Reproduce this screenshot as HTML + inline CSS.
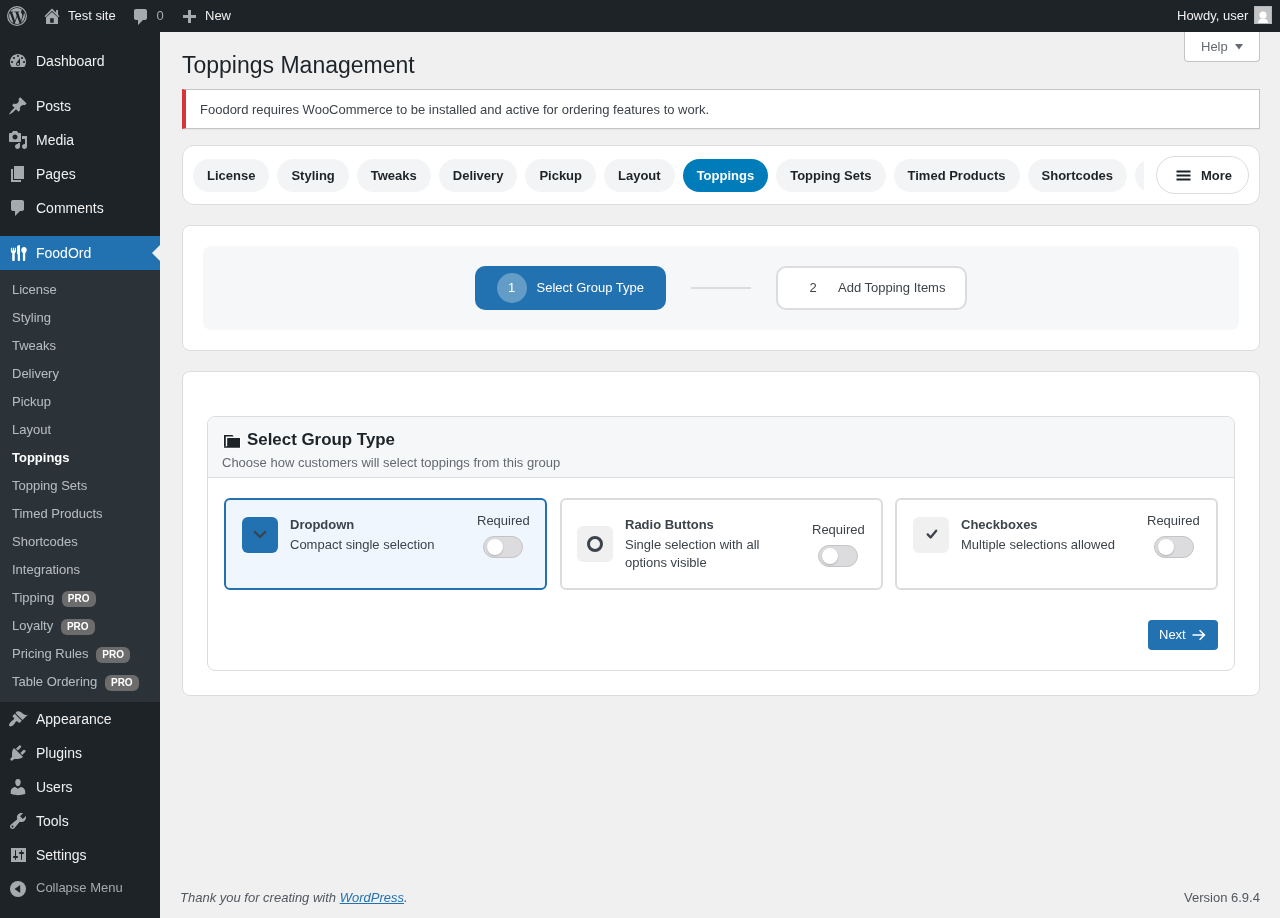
<!DOCTYPE html>
<html><head><meta charset="utf-8">
<style>
*{box-sizing:border-box;margin:0;padding:0}
html,body{width:1280px;height:918px;overflow:hidden;background:#f0f0f1;font-family:"Liberation Sans",sans-serif;font-size:13px;color:#3c434a}
.abs{position:absolute}
#adminbar{position:absolute;left:0;top:0;width:1280px;height:32px;background:#1d2327;color:#f0f0f1;font-size:13px;line-height:32px}
#adminbar .t{position:absolute;top:0;white-space:nowrap}
#menu{position:absolute;left:0;top:32px;width:160px;height:886px;background:#1d2327}
.mi{position:absolute;left:0;width:160px;height:34px;color:#f0f0f1;font-size:14px;line-height:18px}
.mi .lbl{position:absolute;left:36px;top:8px;white-space:nowrap}
.mi svg{position:absolute;left:8px;top:7px;width:20px;height:20px}
#sub{position:absolute;left:0;top:270px;width:160px;height:432px;background:#2c3338}
.si{position:absolute;left:12px;color:rgba(240,246,252,.7);font-size:13px;line-height:18px;white-space:nowrap}
.si.cur{color:#fff;font-weight:700}
.pro{display:inline-block;background:#6c6c6c;color:#fff;font-size:10px;font-weight:700;border-radius:6px;padding:0 6.4px 0 6.3px;line-height:15.5px;height:16px;vertical-align:top;margin-left:7.4px;position:relative;top:2px}

.help{position:absolute;left:1184px;top:32px;width:76px;height:30px;background:#fff;border:1px solid #c3c4c7;border-top:none;border-radius:0 0 4px 4px;color:#646970;font-size:13px}
.h1{position:absolute;left:182px;top:51px;font-size:23px;font-weight:400;color:#1d2327;line-height:29.9px;white-space:nowrap}
.notice{position:absolute;left:182px;top:89px;width:1078px;height:40px;background:#fff;border:1px solid #c3c4c7;border-left:4px solid #d63638;box-shadow:0 1px 1px rgba(0,0,0,.04)}
.notice p{position:absolute;left:14px;top:10px;font-size:13px;line-height:19px;color:#3c434a;white-space:nowrap}
.tabs{position:absolute;left:182px;top:145px;width:1078px;height:60px;background:#fff;border:1px solid #dcdcde;border-radius:12px}
.tabscroll{position:absolute;left:10px;top:0;width:951px;height:58px;overflow:hidden}
.pills{position:absolute;left:0;top:13px;display:flex;gap:8px;white-space:nowrap}
.pill{height:33px;line-height:33px;padding:0 14px;border-radius:17px;background:#f3f4f5;color:#1d2327;font-weight:700;font-size:13px}
.pill.on{background:#007cba;color:#fff}
.more{position:absolute;left:973px;top:10px;width:93px;height:38px;border:1px solid #dcdcde;border-radius:19px;background:#fff;font-weight:700;color:#1d2327;font-size:13px}
.card{position:absolute;left:182px;width:1078px;background:#fff;border:1px solid #dcdcde;border-radius:8px}
.stepbg{position:absolute;left:20px;top:20px;width:1036px;height:84px;background:#f6f7f9;border-radius:8px}
.step{position:absolute;top:266px;height:44px;border-radius:10px;font-size:13px;white-space:nowrap}
.gbox{position:absolute;left:207px;top:416px;width:1028px;height:255px;border:1px solid #dcdcde;border-radius:8px;background:#fff;overflow:hidden}
.ghead{position:absolute;left:0;top:0;width:100%;height:61px;background:#f6f7f9;border-bottom:1px solid #dcdcde}
.opt{position:absolute;top:498px;width:323px;height:92px;border:2px solid #dcdcde;border-radius:6px;background:#fff}
.opt.sel{border-color:#2271b1;background:#eff6fd}
.ibox{position:absolute;width:36px;height:36px;border-radius:6px;background:#f0f0f1}
.ot{position:absolute;font-size:13px;line-height:18px;color:#3c434a}
.ot b{display:block;color:#3c434a;font-weight:700}
.req{position:absolute;font-size:13px;line-height:18px;color:#3c434a;white-space:nowrap}
.tog{position:absolute;width:40px;height:22px;border-radius:11px;background:#dcdcde;border:1px solid #c3c4c7}
.tog i{position:absolute;left:3px;top:2px;width:16px;height:16px;border-radius:50%;background:#fff;box-shadow:0 1px 2px rgba(0,0,0,.2)}
.next{position:absolute;left:1148px;top:620px;width:70px;height:30px;background:#2271b1;border-radius:4px;color:#fff;font-size:13px}
.foot{position:absolute;left:180px;top:889px;font-size:13px;line-height:18px;color:#50575e;font-style:italic;white-space:nowrap}
.foot a{color:#2271b1;text-decoration:underline}
.ver{position:absolute;right:20px;top:889px;font-size:13px;line-height:18px;color:#50575e;white-space:nowrap}

body>*{will-change:transform}</style></head><body>

<div id="adminbar">
  <svg class="abs" style="left:7px;top:6px" width="20" height="20" viewBox="0 0 24 24"><circle cx="12" cy="12" r="11.2" fill="none" stroke="#a7aaad" stroke-width="1.5"/><path transform="translate(12 12) scale(0.88) translate(-12 -12)" d="M21.469 6.825c.84 1.537 1.318 3.3 1.318 5.175 0 3.979-2.156 7.456-5.363 9.325l3.295-9.527c.615-1.54.82-2.771.82-3.864 0-.405-.026-.78-.07-1.11m-7.981.105c.647-.03 1.232-.105 1.232-.105.582-.075.514-.93-.067-.899 0 0-1.755.135-2.88.135-1.064 0-2.85-.15-2.85-.15-.585-.03-.661.855-.075.885 0 0 .54.061 1.125.09l1.68 4.605-2.37 7.08L5.354 6.9c.649-.03 1.234-.1 1.234-.1.585-.075.516-.93-.065-.896 0 0-1.746.138-2.874.138-.2 0-.438-.008-.69-.015C4.911 3.15 8.235 1.215 12 1.215c2.809 0 5.365 1.072 7.286 2.833-.046-.003-.091-.009-.141-.009-1.06 0-1.812.923-1.812 1.914 0 .89.513 1.643 1.06 2.531.411.72.89 1.643.89 2.977 0 .915-.354 1.994-.821 3.479l-1.075 3.585-3.9-11.61.001.014zM12 22.784c-1.059 0-2.081-.153-3.048-.437l3.237-9.406 3.315 9.087c.024.053.05.101.078.149-1.12.393-2.325.609-3.582.609M1.211 12c0-1.564.336-3.05.935-4.39L7.29 21.709C3.694 19.96 1.212 16.271 1.211 12" fill="#a7aaad"/></svg>
  <svg class="abs" style="left:40px;top:4px" width="24" height="24" viewBox="0 0 24 24"><path d="M5.5 12.2 L12 5.7 L18.5 12.2" fill="none" stroke="#a7aaad" stroke-width="1.6" stroke-linecap="round"/><rect x="16.1" y="6" width="1.9" height="5" fill="#a7aaad"/><path d="M6 13.6 L12 8 L18 13.6 V20.1 H6Z M10.2 14.2 V18.7 H13.7 V14.2Z" fill="#a7aaad" fill-rule="evenodd"/></svg>
  <span class="t" style="left:68px">Test site</span>
  <svg class="abs" style="left:131px;top:7px" width="20" height="20" viewBox="0 0 20 20"><path d="M5 2h9c1.1 0 2 .9 2 2v7c0 1.1-.9 2-2 2h-2l-5 5v-5H5c-1.1 0-2-.9-2-2V4c0-1.1.9-2 2-2z" fill="#a7aaad"/></svg>
  <span class="t" style="left:156.6px;color:#a7aaad">0</span>
  <svg class="abs" style="left:183px;top:10px" width="13" height="13" viewBox="0 0 13 13"><path d="M5 0 H8 V5 H13 V8 H8 V13 H5 V8 H0 V5 H5Z" fill="#a7aaad"/></svg>
  <span class="t" style="left:205px">New</span>
  <span class="t" style="left:1177px">Howdy, user</span>
  <div class="abs" style="left:1254px;top:6px;width:18px;height:18px;background:#c4c4c4;border:1px solid #b4b6b8;overflow:hidden"><svg class="abs" style="left:0;top:0" width="16" height="16" viewBox="0 0 16 16"><circle cx="8" cy="8" r="3.6" fill="#fff"/><path d="M2.8 16.5 C3 13.2 5 11.6 8 11.6 C11 11.6 13 13.2 13.2 16.5Z" fill="#fff"/></svg></div>
</div>

<div id="menu"></div>
<div class="mi" style="top:44px"><svg viewBox="0 0 20 20"><path fill-rule="evenodd" d="M3.76 16h12.48c1.1-1.37 1.76-3.11 1.76-5 0-4.42-3.58-8-8-8s-8 3.58-8 8c0 1.89.66 3.63 1.76 5zM10 4c.55 0 1 .45 1 1s-.45 1-1 1-1-.45-1-1 .45-1 1-1zM6 6c.55 0 1 .45 1 1s-.45 1-1 1-1-.45-1-1 .45-1 1-1zm8 0c.55 0 1 .45 1 1s-.45 1-1 1-1-.45-1-1 .45-1 1-1zm-5.37 5.55L12 7v6c0 1.1-.9 2-2 2s-2-.9-2-2c0-.57.24-1.08.63-1.45zM4 10c.55 0 1 .45 1 1s-.45 1-1 1-1-.45-1-1 .45-1 1-1zm12 0c.55 0 1 .45 1 1s-.45 1-1 1-1-.45-1-1 .45-1 1-1zm-5 3c0-.55-.45-1-1-1s-1 .45-1 1 .45 1 1 1 1-.45 1-1z" fill="#a7aaad"/></svg><span class="lbl">Dashboard</span></div>
<div class="mi" style="top:89px"><svg viewBox="0 0 20 20"><path d="M10.44 3.02l1.82-1.82 6.36 6.35-1.83 1.82c-1.05-.68-2.48-.57-3.41.36l-.75.75c-.92.93-1.04 2.35-.35 3.41l-1.83 1.82-2.41-2.41-2.8 2.79c-.42.42-3.38 2.71-3.8 2.29s1.86-3.39 2.28-3.81l2.79-2.79L4.1 9.36l1.83-1.82c1.05.69 2.48.57 3.4-.36l.75-.75c.93-.92 1.05-2.35.36-3.41z" fill="#a7aaad"/></svg><span class="lbl">Posts</span></div>
<div class="mi" style="top:123px"><svg viewBox="0 0 20 20"><path fill-rule="evenodd" d="M13 11V4c0-.55-.45-1-1-1h-1.67L9 1H5L3.67 3H2c-.55 0-1 .45-1 1v7c0 .55.45 1 1 1h10c.55 0 1-.45 1-1zM7 4.5c1.38 0 2.5 1.12 2.5 2.5S8.38 9.5 7 9.5 4.5 8.38 4.5 7 5.62 4.5 7 4.5zM14 6h5v10.5c0 1.38-1.12 2.5-2.5 2.5S14 17.88 14 16.5s1.12-2.5 2.5-2.5c.17 0 .34.02.5.05V9h-3V6zM10 14.05V13h2v3.5c0 1.38-1.12 2.5-2.5 2.5S7 17.88 7 16.5 8.12 14 9.5 14c.17 0 .34.02.5.05z" fill="#a7aaad"/></svg><span class="lbl">Media</span></div>
<div class="mi" style="top:157px"><svg viewBox="0 0 20 20"><path d="M6 15V2h10v13H6zm-1 1h8v2H3V5h2v11z" fill="#a7aaad"/></svg><span class="lbl">Pages</span></div>
<div class="mi" style="top:191px"><svg viewBox="0 0 20 20"><path d="M5 2h9c1.1 0 2 .9 2 2v7c0 1.1-.9 2-2 2h-2l-5 5v-5H5c-1.1 0-2-.9-2-2V4c0-1.1.9-2 2-2z" fill="#a7aaad"/></svg><span class="lbl">Comments</span></div>
<div class="mi" style="top:236px;background:#2271b1;color:#fff"><svg viewBox="0 0 20 20"><path fill="#fff" d="M2.9 5.0 C2.9 4.8 3.1 4.7 3.5 4.7 C3.9 4.7 4.1 4.8 4.1 5.0 V7.3 C4.1 7.5 4.3 7.6 4.5 7.6 C4.7 7.6 4.9 7.5 4.9 7.3 V5.0 C4.9 4.8 5.1 4.7 5.45 4.7 C5.8 4.7 6.0 4.8 6.0 5.0 V7.3 C6.0 7.5 6.2 7.6 6.4 7.6 C6.6 7.6 6.75 7.5 6.75 7.3 V5.0 C6.75 4.8 7 4.7 7.4 4.7 C7.8 4.7 8 4.8 8 5.0 V8.2 C8 9.1 7.5 9.7 6.75 10 V17.3 C6.75 17.7 6.4 17.9 6 17.9 H5 C4.6 17.9 4.2 17.7 4.2 17.3 V10 C3.4 9.7 2.9 9.1 2.9 8.2 Z M9 3.7 C9 2.7 10.6 1.9 11.6 1.9 C11.85 1.9 12 2 12 2.2 V17.3 C12 17.7 11.7 17.9 11.3 17.9 H10.5 C10.1 17.9 9.75 17.7 9.75 17.3 V11.4 C9.3 11.3 9 11 9 10.6 Z M16 4.0 C17.5 4.0 18.75 5.3 18.75 7.1 C18.75 8.5 18 9.6 17.2 10 V17.3 C17.2 17.7 16.9 17.9 16.5 17.9 H15.6 C15.2 17.9 14.9 17.7 14.9 17.3 V10 C14 9.6 13.25 8.5 13.25 7 C13.25 5.3 14.5 4.0 16 4.0 Z"/></svg><span class="lbl">FoodOrd</span><div class="abs" style="right:0;top:9px;width:0;height:0;border:8px solid transparent;border-right-color:#f0f0f1"></div></div>
<div id="sub"></div>
<div class="si" style="top:281px">License</div>
<div class="si" style="top:309px">Styling</div>
<div class="si" style="top:337px">Tweaks</div>
<div class="si" style="top:365px">Delivery</div>
<div class="si" style="top:393px">Pickup</div>
<div class="si" style="top:421px">Layout</div>
<div class="si cur" style="top:449px">Toppings</div>
<div class="si" style="top:477px">Topping Sets</div>
<div class="si" style="top:505px">Timed Products</div>
<div class="si" style="top:533px">Shortcodes</div>
<div class="si" style="top:561px">Integrations</div>
<div class="si" style="top:589px">Tipping<span class="pro">PRO</span></div>
<div class="si" style="top:617px">Loyalty<span class="pro">PRO</span></div>
<div class="si" style="top:645px">Pricing Rules<span class="pro">PRO</span></div>
<div class="si" style="top:673px">Table Ordering<span class="pro">PRO</span></div>
<div class="mi" style="top:702px"><svg viewBox="0 0 20 20"><path d="M14.48 11.06L7.41 3.99l1.5-1.5c.5-.56 2.3-.47 3.51.32 1.21.8 1.43 1.28 2.91 2.1 1.18.64 2.45 1.26 4.45.85zm-.71.71L6.7 4.7 4.93 6.47c-.39.39-.39 1.02 0 1.41l1.06 1.06c.39.39.39 1.03 0 1.42-.6.6-1.43 1.11-2.21 1.69-.35.26-.7.53-1.01.84C1.43 14.23.4 16.08 1.4 17.07c.99 1 2.84-.03 4.18-1.36.31-.31.58-.66.85-1.02.57-.78 1.08-1.61 1.69-2.21.39-.39 1.02-.39 1.41 0l1.06 1.06c.39.39 1.02.39 1.41 0z" fill="#a7aaad"/></svg><span class="lbl">Appearance</span></div>
<div class="mi" style="top:736px"><svg viewBox="0 0 20 20"><path d="M13.11 4.36L9.87 7.6 8 5.73l3.24-3.24c.35-.34 1.05-.2 1.56.32.52.51.66 1.21.31 1.55zm-8 1.77l.91-1.12 9.01 9.01-1.19.84c-.71.71-2.63 1.16-3.82 1.16H6.14L4.9 17.26c-.59.59-1.54.59-2.12 0-.59-.58-.59-1.53 0-2.12l1.24-1.24v-3.88c0-1.13.4-3.19 1.09-3.89zm7.26 3.97l3.24-3.24c.34-.35 1.04-.21 1.55.31.52.51.66 1.21.31 1.55l-3.24 3.25z" fill="#a7aaad"/></svg><span class="lbl">Plugins</span></div>
<div class="mi" style="top:770px"><svg viewBox="0 0 20 20"><path d="M10 9.25c-2.27 0-2.73-3.44-2.73-3.44C7 4.02 7.82 2 9.97 2c2.16 0 2.98 2.02 2.71 3.81 0 0-.41 3.44-2.68 3.44zm0 2.57L12.72 10c2.39 0 4.52 2.33 4.52 4.53v2.49s-3.65 1.13-7.24 1.13c-3.65 0-7.24-1.13-7.24-1.13v-2.49c0-2.25 1.94-4.48 4.47-4.48z" fill="#a7aaad"/></svg><span class="lbl">Users</span></div>
<div class="mi" style="top:804px"><svg viewBox="0 0 20 20"><path fill-rule="evenodd" d="M16.68 9.77c-1.34 1.34-3.3 1.67-4.95.99l-5.41 6.52c-.99.99-2.59.99-3.58 0s-.99-2.59 0-3.57l6.52-5.42c-.68-1.65-.35-3.61.99-4.95 1.28-1.28 3.12-1.62 4.72-1.06l-2.89 2.89 2.82 2.82 2.86-2.87c.53 1.58.18 3.39-1.08 4.65zM3.81 16.21c.4.39 1.04.39 1.43 0 .4-.4.4-1.04 0-1.43-.39-.4-1.03-.4-1.43 0-.39.39-.39 1.03 0 1.43z" fill="#a7aaad"/></svg><span class="lbl">Tools</span></div>
<div class="mi" style="top:838px"><svg viewBox="0 0 20 20"><path fill-rule="evenodd" d="M18 17V3H3v14zM8 11h1c.55 0 1 .45 1 1s-.45 1-1 1H8v1.5c0 .28-.22.5-.5.5s-.5-.22-.5-.5V13H6c-.55 0-1-.45-1-1s.45-1 1-1h1V5.5c0-.28.22-.5.5-.5s.5.22.5.5V11zm5-2h-1c-.55 0-1-.45-1-1s.45-1 1-1h1V5.5c0-.28.22-.5.5-.5s.5.22.5.5V7h1c.55 0 1 .45 1 1s-.45 1-1 1h-1v5.5c0 .28-.22.5-.5.5s-.5-.22-.5-.5V9z" fill="#a7aaad"/></svg><span class="lbl">Settings</span></div>
<div class="abs" style="left:0;top:871px;width:160px;height:34px;color:#a7aaad;font-size:13px;line-height:18px"><svg class="abs" style="left:10px;top:10px" width="16" height="16" viewBox="0 0 16 16"><circle cx="8" cy="8" r="8" fill="#a7aaad"/><path d="M10.2 4 V12 L4.5 8Z" fill="#1d2327"/></svg><span class="abs" style="left:36px;top:8px;white-space:nowrap">Collapse Menu</span></div>


<div class="help"><span class="abs" style="left:16px;top:6px;line-height:18px">Help</span><svg class="abs" style="left:50px;top:12px" width="8" height="6" viewBox="0 0 8 6"><path d="M0 0 H8 L4 5.5Z" fill="#646970"/></svg></div>
<div class="h1">Toppings Management</div>
<div class="notice"><p>Foodord requires WooCommerce to be installed and active for ordering features to work.</p></div>
<div class="tabs">
  <div class="tabscroll"><div class="pills"><span class="pill">License</span><span class="pill">Styling</span><span class="pill">Tweaks</span><span class="pill">Delivery</span><span class="pill">Pickup</span><span class="pill">Layout</span><span class="pill on">Toppings</span><span class="pill">Topping Sets</span><span class="pill">Timed Products</span><span class="pill">Shortcodes</span><span class="pill">Integrations</span></div></div>
  <div class="more"><svg class="abs" style="left:18.5px;top:13px" width="15" height="11" viewBox="0 0 15 11"><path d="M0.5 0.5 H14.5 V2.5 H0.5Z M0.5 4.5 H14.5 V6.5 H0.5Z M0.5 8.5 H14.5 V10.5 H0.5Z" fill="#1d2327"/></svg><span class="abs" style="left:44px;top:10px;line-height:18px">More</span></div>
</div>
<div class="card" style="top:225px;height:126px"><div class="stepbg"></div></div>
<div class="step" style="left:475px;width:191px;background:#2271b1;color:#fff"><span class="abs" style="left:22px;top:7px;width:30px;height:30px;border-radius:50%;background:rgba(255,255,255,.3);text-align:center;line-height:30px;padding-right:1px">1</span><span class="abs" style="left:61.5px;top:13px;line-height:18px">Select Group Type</span></div>
<div class="abs" style="left:691px;top:287px;width:60px;height:2px;background:#dcdcde"></div>
<div class="step" style="left:776px;width:191px;background:#fff;border:2px solid #dcdcde;color:#3c434a"><span class="abs" style="left:20px;top:5px;width:30px;height:30px;text-align:center;line-height:30px">2</span><span class="abs" style="left:60px;top:11px;line-height:18px">Add Topping Items</span></div>
<div class="card" style="top:371px;height:325px"></div>
<div class="gbox"><div class="ghead"></div></div>
<svg class="abs" style="left:218px;top:428px" width="28" height="24" viewBox="0 0 28 24"><g stroke="#fff" stroke-width="1.6" stroke-linejoin="round"><path d="M6 7 H14.5 L15.8 8.6 H7.8 V18.2 H6Z"/><path d="M9.2 10 H22 V19.7 H6 V18.2 H9.2Z"/></g><path d="M6 7 H14.5 L15.8 8.6 H7.8 V18.2 H6Z" fill="#1d2327"/><path d="M9.2 10 H22 V19.7 H6 V18.2 H9.2Z" fill="#1d2327"/></svg>
<div class="abs" style="left:247px;top:429px;font-size:16.9px;line-height:21px;font-weight:700;color:#1d2327;white-space:nowrap">Select Group Type</div>
<div class="abs" style="left:222px;top:454px;font-size:13px;line-height:18px;color:#646970;white-space:nowrap">Choose how customers will select toppings from this group</div>

<div class="opt sel" style="left:224px"></div>
<div class="ibox" style="left:242px;top:517px;background:#2271b1"><svg class="abs" style="left:0;top:0" width="36" height="36" viewBox="0 0 36 36"><path d="M12.2 14.3 L18 20 L23.8 14.3" fill="none" stroke="#3c434a" stroke-width="2.2"/></svg></div>
<div class="ot" style="left:290px;top:516px;width:170px"><b>Dropdown</b><span style="display:block;margin-top:2px">Compact single selection</span></div>
<div class="req" style="left:477px;top:512px">Required</div>
<div class="tog" style="left:483px;top:536px"><i></i></div>

<div class="opt" style="left:559.5px"></div>
<div class="ibox" style="left:577px;top:526px"><svg class="abs" style="left:0;top:0" width="36" height="36" viewBox="0 0 36 36"><circle cx="18" cy="18" r="6.5" fill="none" stroke="#3c434a" stroke-width="3"/></svg></div>
<div class="ot" style="left:625px;top:516px;width:165px"><b>Radio Buttons</b><span style="display:block;margin-top:2px">Single selection with all options visible</span></div>
<div class="req" style="left:812px;top:521px">Required</div>
<div class="tog" style="left:818px;top:545px"><i></i></div>

<div class="opt" style="left:895px;width:323px"></div>
<div class="ibox" style="left:913px;top:517px"><svg class="abs" style="left:0;top:0" width="36" height="36" viewBox="0 0 36 36"><path d="M14.7 17.4 L17.6 20.5 L23.2 13.7" fill="none" stroke="#3c434a" stroke-width="2.3" stroke-linecap="round" stroke-linejoin="round"/></svg></div>
<div class="ot" style="left:961px;top:516px;width:170px"><b>Checkboxes</b><span style="display:block;margin-top:2px">Multiple selections allowed</span></div>
<div class="req" style="left:1147px;top:512px">Required</div>
<div class="tog" style="left:1154px;top:536px"><i></i></div>

<div class="next"><span class="abs" style="left:11px;top:6px;line-height:18px">Next</span><svg class="abs" style="left:44px;top:8px" width="14" height="14" viewBox="0 0 14 14"><path d="M0.5 7 H12.3 M7.6 2.2 L12.4 7 L7.6 11.8" fill="none" stroke="#fff" stroke-width="1.6"/></svg></div>

<div class="foot">Thank you for creating with <a>WordPress</a>.</div>
<div class="ver">Version 6.9.4</div>


</body></html>
